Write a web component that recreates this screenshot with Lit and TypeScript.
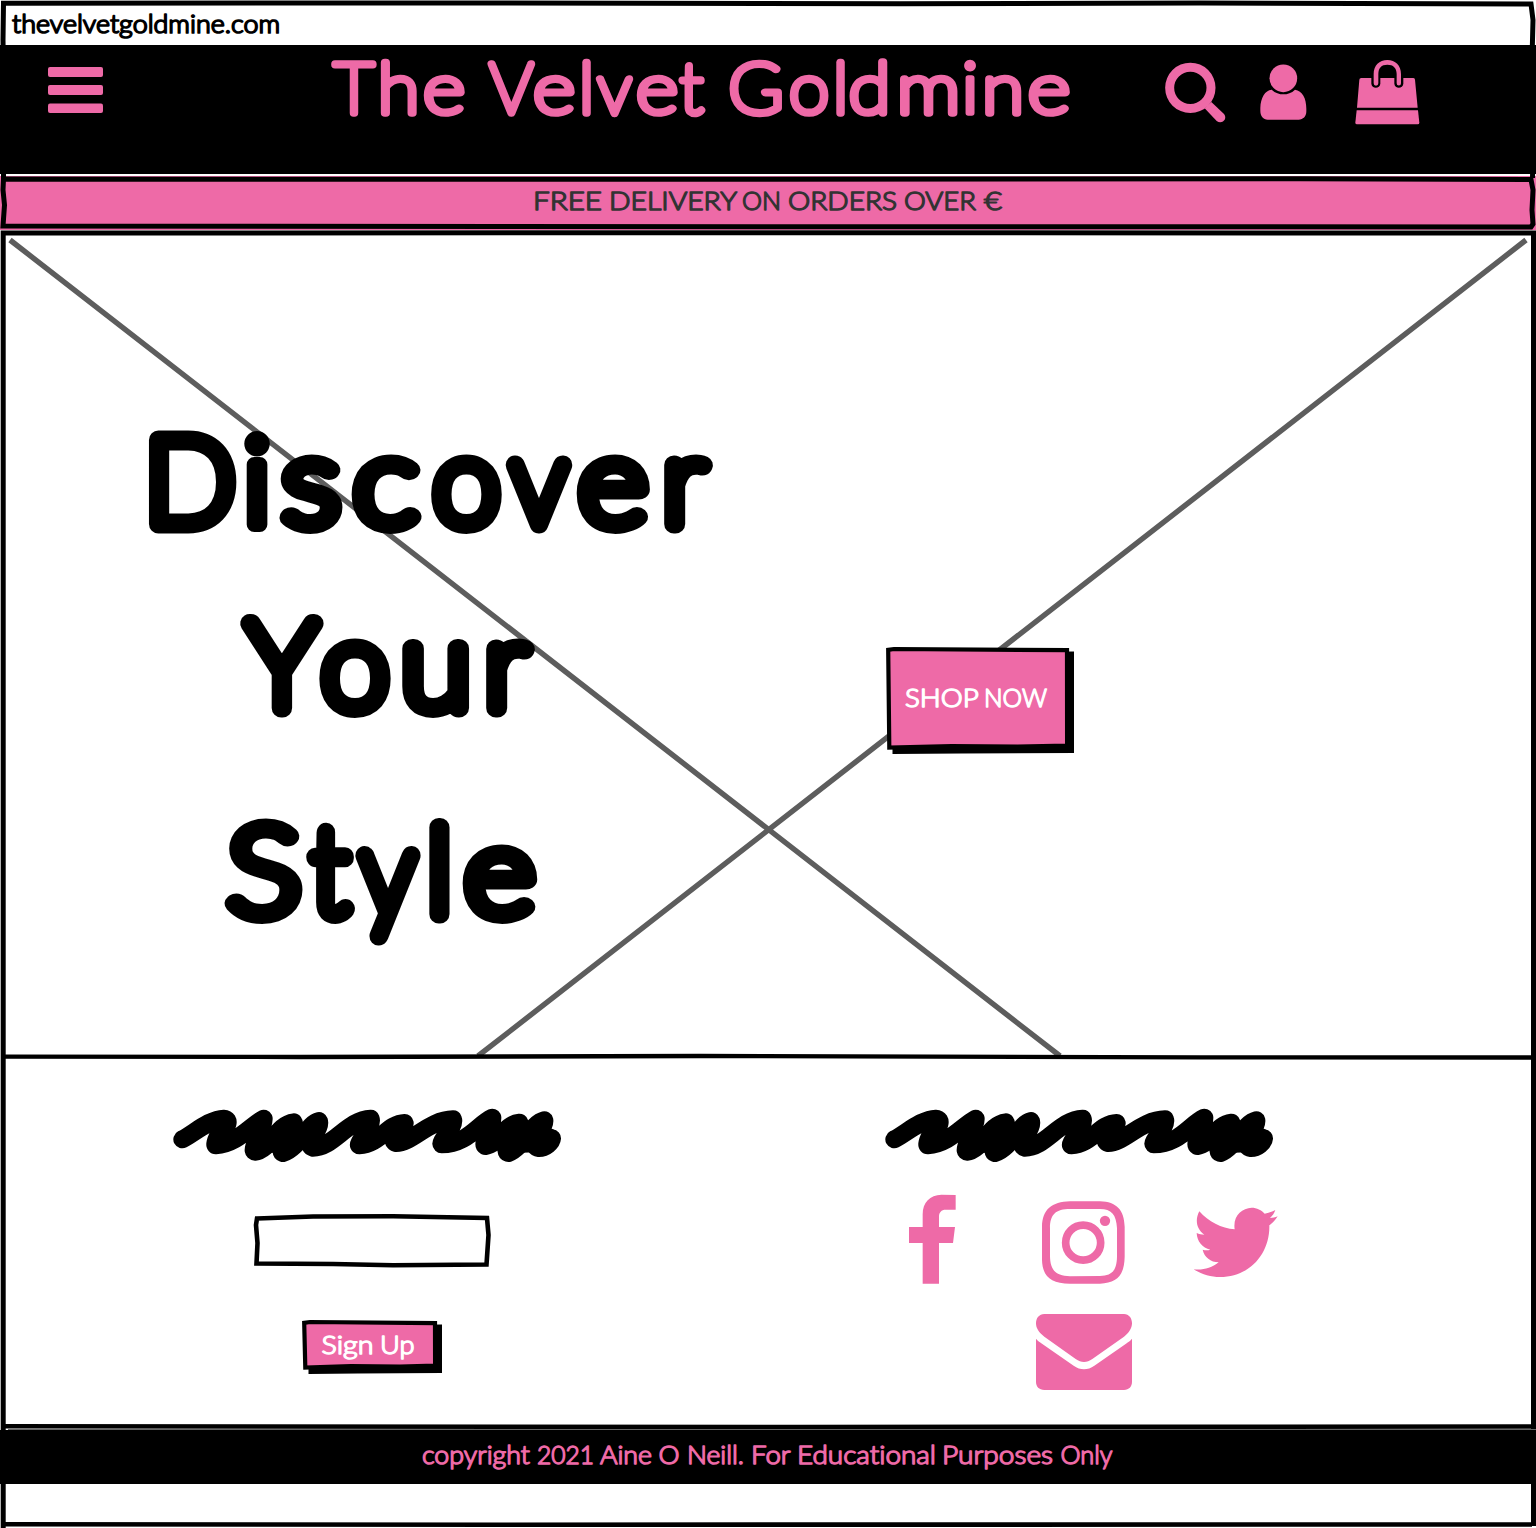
import { LitElement, html, svg, css } from "lit";
import { customElement, property } from "lit/decorators.js";

type Word = { t: string; x: number; w: number };
/** Centre of a letter and how far it is stretched sideways. */
type Mark = [number, number];

/** One line of rounded lettering, word by word. */
@customElement("sketch-line")
class SketchLine extends LitElement {
  @property({ attribute: false }) words: Word[] = [];
  @property({ type: Number }) width = 100;
  @property({ type: Number }) height = 30;
  @property({ type: Number }) base = 20;
  static styles = css`
    :host { display: block; }
    svg { display: block; overflow: visible; }
    text {
      font-family: Lato, "Open Sans", sans-serif;
      font-weight: 300;
      font-variant-ligatures: none;
      font-size: var(--size, 25px);
      fill: currentColor;
      stroke: currentColor;
      stroke-width: var(--pen, 1.4px);
      stroke-linejoin: round;
    }
  `;
  render() {
    return html`<svg width=${this.width} height=${this.height}>
      <text y=${this.base}>${this.words.map((w, i) => svg`<tspan x=${w.x} textLength=${w.w} lengthAdjust="spacingAndGlyphs">${w.t}</tspan>${i < this.words.length - 1 ? " " : ""}`)}</text>
    </svg>`;
  }
}

/** Heading lettering with each letter centred on its own mark. */
@customElement("sketch-heading")
class SketchHeading extends LitElement {
  @property() text = "";
  @property({ attribute: false }) marks: Mark[] = [];
  @property({ type: Number }) width = 100;
  @property({ type: Number }) height = 100;
  @property({ type: Number }) base = 80;
  static styles = css`
    :host { display: block; }
    svg { display: block; overflow: visible; }
    text {
      font-family: Lato, "Open Sans", sans-serif;
      font-weight: 100;
      font-size: var(--size, 70px);
      text-anchor: middle;
      fill: currentColor;
      stroke: currentColor;
      stroke-width: var(--pen, 4px);
      stroke-linejoin: round;
      stroke-linecap: round;
    }
    .dotted { font-weight: 300; stroke-width: var(--dot-pen, 5px); }
  `;
  render() {
    return html`<svg width=${this.width} height=${this.height}>
      <text y=${this.base}>${[...this.text].map((c, i) => svg`<tspan class=${c === "i" ? "dotted" : "plain"} x=${this.marks[i][0]}>${c}</tspan>`)}</text>
    </svg>`;
  }
  firstUpdated() {
    this.renderRoot.querySelectorAll("tspan").forEach((node, i) => {
      const stretch = this.marks[i][1];
      if (stretch === 1) return;
      const length = (node as SVGTSpanElement).getComputedTextLength();
      if (!length) return;
      node.setAttribute("lengthAdjust", "spacingAndGlyphs");
      node.setAttribute("textLength", String(length * stretch));
    });
  }
}

@customElement("scribble-title")
class ScribbleTitle extends LitElement {
  static styles = css`
    :host { display: block; width: 390px; height: 56px; }
    svg { display: block; }
    path { fill: none; stroke: #000; stroke-width: 54; stroke-linecap: round; stroke-linejoin: round; }
  `;
  render() {
    return html`<svg width="390" height="56" viewBox="38 50 1170 168">
      <path d="M66 147C102 128 148 86 190 85C212 86 200 112 184 124C168 138 162 165 166 165C232 160 270 106 310 85C313 110 266 184 284 184C330 180 348 102 400 96C412 112 346 180 368 188C420 170 440 100 476 92C484 116 430 165 458 172C520 172 560 88 631 85C640 108 588 158 597 165C660 162 680 100 733 98C736 116 680 150 708 158C756 158 806 88 878 87C886 108 836 154 844 162C920 162 950 104 996 82C998 110 962 160 975 167C1020 160 1030 102 1077 97C1082 112 1020 180 1044 188C1090 170 1112 100 1152 90C1156 112 1100 168 1136 173C1156 173 1174 156 1175 144"/>
      <path d="M290 148L368 140L460 136M642 138L708 130M985 138L1060 142L1165 140M286 160L380 160M1050 162L1140 158"/>
    </svg>`;
  }
}

@customElement("sketch-button")
class SketchButton extends LitElement {
  @property({ type: Number }) w = 188;
  @property({ type: Number }) h = 108;
  static styles = css`
    :host { display: block; }
    .box { display: grid; }
    .box > svg, ::slotted(*) { grid-area: 1 / 1; }
    svg { display: block; overflow: visible; }
    .shade { fill: #000; }
    .face { fill: #ee6aa7; stroke: #000; stroke-width: 4.2; }
  `;
  render() {
    const { w, h } = this;
    return html`<div class="box">
      <svg width=${w} height=${h}>
        <path class="shade" d="M6 6L${w} 4.600V${h - 2}L${w * 0.4} ${h - 1.5}L6.500 ${h - 1}V${h - 4}Z"/>
        <path class="face" d="M2.200 2.800L8 2L${w - 7} 3.100L${w - 6.9} ${h - 9.500}L${w * 0.7} ${h - 8.500}L${w * 0.35} ${h - 9}L3.300 ${h - 7.500}Z"/>
      </svg>
      <slot></slot>
    </div>`;
  }
}

@customElement("app-root")
class AppRoot extends LitElement {
  static styles = css`
    :host { display: block; }
    .page { position: relative; width: 1536px; height: 1528px; display: flex; flex-direction: column; background: #fff; color: #000; overflow: hidden; }
    .page > * { flex: none; }
    .frame { position: absolute; left: 0; top: 0; pointer-events: none; }
    .address { height: 45px; --pen: 1.7px; }
    .header { height: 129px; background: #000; color: #ee6aa7; display: flex; }
    .menu { padding: 22px 0 0 48px; width: 282px; box-sizing: border-box; }
    .icons { padding: 14px 0 0 110px; display: flex; align-items: flex-start; }
    .header svg { fill: currentColor; display: block; }
    .title { --size: 70px; --pen: 7.6px; --dot-pen: 5.6px; width: 770px; }
    .promo { height: 54px; margin-top: 2px; background: #ee6aa7; color: #333; }
    .hero { height: 827px; display: grid; }
    .hero > * { grid-area: 1 / 1; }
    .cross { stroke: #5d5d5d; stroke-width: 5.4; }
    .slogan { --size: 119.5px; --pen: 18.8px; --dot-pen: 15px; padding-top: 170px; }
    .shop { padding: 417px 0 0 886px; color: #fff; justify-self: start; }
    .contact { height: 373px; display: flex; }
    .signup { width: 712px; padding: 50px 0 0 173px; display: flex; flex-direction: column; box-sizing: border-box; }
    .field { margin: 50px 0 0 80px; display: block; }
    .join { margin: 51px 0 0 129px; color: #fff; }
    .social { padding: 50px 0 0 173px; }
    .glyphs { display: block; fill: #ee6aa7; margin-top: 28px; }
    .copy { height: 54px; background: #000; color: #ee6aa7; }
    .blank { height: 44px; }
    .ink { fill: none; stroke: #000; }
  `;

  private titleMarks: Mark[] = ([
    [354, 1], [398.5, 1.08], [444, 1.15], [477, 1], [511.5, 0.97], [554, 1.15], [586.5, 1], [614.5, 0.98], [657, 1.15], [691.5, 1], [717, 1],
    [756, 1.06], [809, 1.03], [840.5, 1], [869.5, 1.08], [928.5, 1.14], [970, 1], [1003, 1.09], [1049, 1.16],
  ] as Mark[]).map(([x, s]): Mark => [x - 282, s]);

  render() {
    return html`<div class="page">
      <sketch-line class="address" .width=${1536} .height=${45} .base=${33.4} .words=${[{ t: "thevelvetgoldmine.com", x: 12, w: 268 }]}></sketch-line>

      <div class="header">
        <div class="menu">
          <svg width="55" height="46"><rect width="55" height="10" rx="2"/><rect y="18" width="55" height="10" rx="2"/><rect y="36.5" width="55" height="9.5" rx="2"/></svg>
        </div>
        <sketch-heading class="title" text="The Velvet Goldmine" .width=${770} .height=${129} .base=${68} .marks=${this.titleMarks}></sketch-heading>
        <div class="icons">
          <svg width="310" height="70" viewBox="98 177 930 210">
            <path fill-rule="evenodd" d="M183 188a75.500 75.500 0 1 1 0 151a75.500 75.500 0 1 1 0-151zM183 215a48.500 48.500 0 1 0 0 97a48.500 48.500 0 1 0 0-97z"/>
            <path d="M226 325L246 306L284 342C296 357 278 374 262 363Z"/>
            <circle cx="462" cy="235" r="41.500"/>
            <path d="M427 269C438 279 450 283 462 283S487 279 497 269C519 272 531 294 531 326V334C531 350 521 359 508 359H415C402 359 393 348 393 332V324C394 293 407 271 427 269Z"/>
            <path d="M733 250V222C733 196 750 180 774 180S815 196 815 222V250A6.500 6.500 0 0 1 802 250V222C802 204 792 194 774 194S747 204 747 222V250A7 7 0 0 1 733 250Z"/>
            <path d="M696 234H726V251C727 267 752 267 753 251V234H795V251C796 267 821 267 822 251V234H852Q857 234 857 239L865 323H683L690 239Q690 234 696 234Z"/>
            <path d="M682 331H866L870 368Q870 373 865 373H683Q678 373 678 368Z"/>
          </svg>
        </div>
      </div>

      <sketch-line class="promo" .width=${1536} .height=${54} .base=${33.5} .words=${[
        { t: "FREE", x: 533, w: 69 }, { t: "DELIVERY", x: 609, w: 127 }, { t: "ON", x: 742, w: 39 },
        { t: "ORDERS", x: 788, w: 109 }, { t: "OVER", x: 904, w: 72 }, { t: "€", x: 984, w: 18 }]}></sketch-line>

      <div class="hero">
        <svg class="cross" width="1536" height="827"><path d="M10 10L1060 826M1526 10L478 826"/></svg>
        <div class="slogan">
          <sketch-heading text="Discover" .width=${800} .height=${184} .base=${123.5}
            .marks=${[[190, 1], [257, 1], [311, 1.13], [385.5, 1.13], [466.5, 1.01], [539, 0.94], [613, 1.1], [684, 1.04]]}></sketch-heading>
          <sketch-heading text="Your" .width=${800} .height=${206} .base=${123.5}
            .marks=${[[282, 1.01], [355, 1.02], [436, 1.07], [506, 1.04]]}></sketch-heading>
          <sketch-heading text="Style" .width=${800} .height=${180} .base=${124}
            .marks=${[[264, 1.15], [330, 0.94], [388, 0.92], [439.5, 1], [499.5, 1.12]]}></sketch-heading>
        </div>
        <sketch-button class="shop" .w=${188} .h=${108}>
          <sketch-line .width=${188} .height=${108} .base=${59.5} .words=${[{ t: "SHOP", x: 19, w: 73 }, { t: "NOW", x: 98, w: 63 }]}></sketch-line>
        </sketch-button>
      </div>

      <div class="contact">
        <div class="signup">
          <scribble-title></scribble-title>
          <svg class="field" width="238" height="56"><path class="ink" stroke-width="4.600" d="M4 5.500L60 3.500L140 3.300L234 5L235.500 22L233.500 51.500L140 52.200L80 51L3.500 50.500L4.500 30L3 12Z"/></svg>
          <sketch-button class="join" .w=${140} .h=${55}>
            <sketch-line .width=${140} .height=${55} .base=${33.8} .words=${[{ t: "Sign", x: 19.500, w: 52 }, { t: "Up", x: 78, w: 34.500 }]}></sketch-line>
          </sketch-button>
        </div>
        <div class="social">
          <scribble-title></scribble-title>
          <svg class="glyphs" width="400" height="210" viewBox="45 303 1200 630">
            <path d="M158 581V459H117V411H158V373C158 337 180 315 214 314L257 315V359H227C214 359 207 367 207 380V411H255L249 459H207V581Z"/>
            <path fill-rule="evenodd" d="M600 333.500H690C740 335 763 360 764 410V500C763 556 741 579 690 581H600C540 581 517 556 516 510V410C517 358 545 335 600 333.500ZM600 357C557 357 540 373 540 415V495C540 540 556 557 600 559L690 558C727 557 740 541 741 500V415C739 373 724 357 690 357Z"/>
            <circle cx="639.500" cy="458" r="52.500" fill="none" stroke="#ee6aa7" stroke-width="23"/>
            <circle cx="705" cy="392.500" r="15.500"/>
            <path d="M988 364C1015 395 1055 416 1094 418C1088 378 1115 354 1145 353C1160 353 1175 360 1184 371C1196 369 1207 365 1216 360C1213 370 1207 378 1200 384C1208 384 1216 382 1223 379C1216 391 1208 399 1198 406C1200 490 1140 561 1050 561C1022 561 995 553 971 538C998 541 1024 535 1046 517C1022 516 1003 502 998 479C1006 481 1014 481 1021 479C997 473 981 454 980 429C987 433 995 434 1003 434C978 417 975 388 988 364Z"/>
            <path d="M523 672H762C777 673 786 684 786 700C786 715 776 730 762 740L667 807C650 819 634 819 617 807L523 740C507 728 498 715 498 700C498 684 507 673 523 672Z"/>
            <path d="M498 746C503 752 509 756 516 761L611 827C631 841 653 841 673 827L768 761C775 756 781 752 786 746V875C786 890 777 899 762 900H523C507 899 498 890 498 875Z"/>
          </svg>
        </div>
      </div>

      <sketch-line class="copy" .width=${1536} .height=${54} .base=${33.5} .words=${[
        { t: "copyright", x: 422, w: 108 }, { t: "2021", x: 537, w: 57 }, { t: "Aine", x: 600, w: 52 }, { t: "O", x: 658.5, w: 21 },
        { t: "Neill.", x: 687, w: 57 }, { t: "For", x: 751, w: 39 }, { t: "Educational", x: 797, w: 139 }, { t: "Purposes", x: 942, w: 111 }, { t: "Only", x: 1060.5, w: 52 }]}></sketch-line>
      <div class="blank"></div>

      <svg class="frame" width="1536" height="1528">
        <path class="ink" stroke-width="5" d="M3.500 178V70L3 40L3.500 3.200L500 3L900 3.800L1200 3L1531 4L1533 20L1532 60L1533.500 120L1532.500 178"/>
        <path class="ink" stroke-width="5" d="M3.500 179L500 179.300L1300 178.800L1531 179.500L1533 190L1532 210L1533 224L1531 227L500 226.500L3 226L4.500 205L3 190Z"/>
        <path class="ink" stroke-width="5" d="M3.200 1528V233L700 232.700L1533.500 233V1526"/>
        <path class="ink" stroke-width="4.300" d="M3 1056.600L300 1057L700 1056L1200 1057.300L1533 1057.500"/>
        <path class="ink" stroke-width="4.600" d="M2 1426.300L800 1427L1534 1426.500"/>
        <path fill="none" stroke="#666" stroke-width="1" d="M8 1429.500H1536"/>
        <path class="ink" stroke-width="4.600" d="M3 1524.200L500 1524.700L1532 1524.500"/>
      </svg>
    </div>`;
  }
}
